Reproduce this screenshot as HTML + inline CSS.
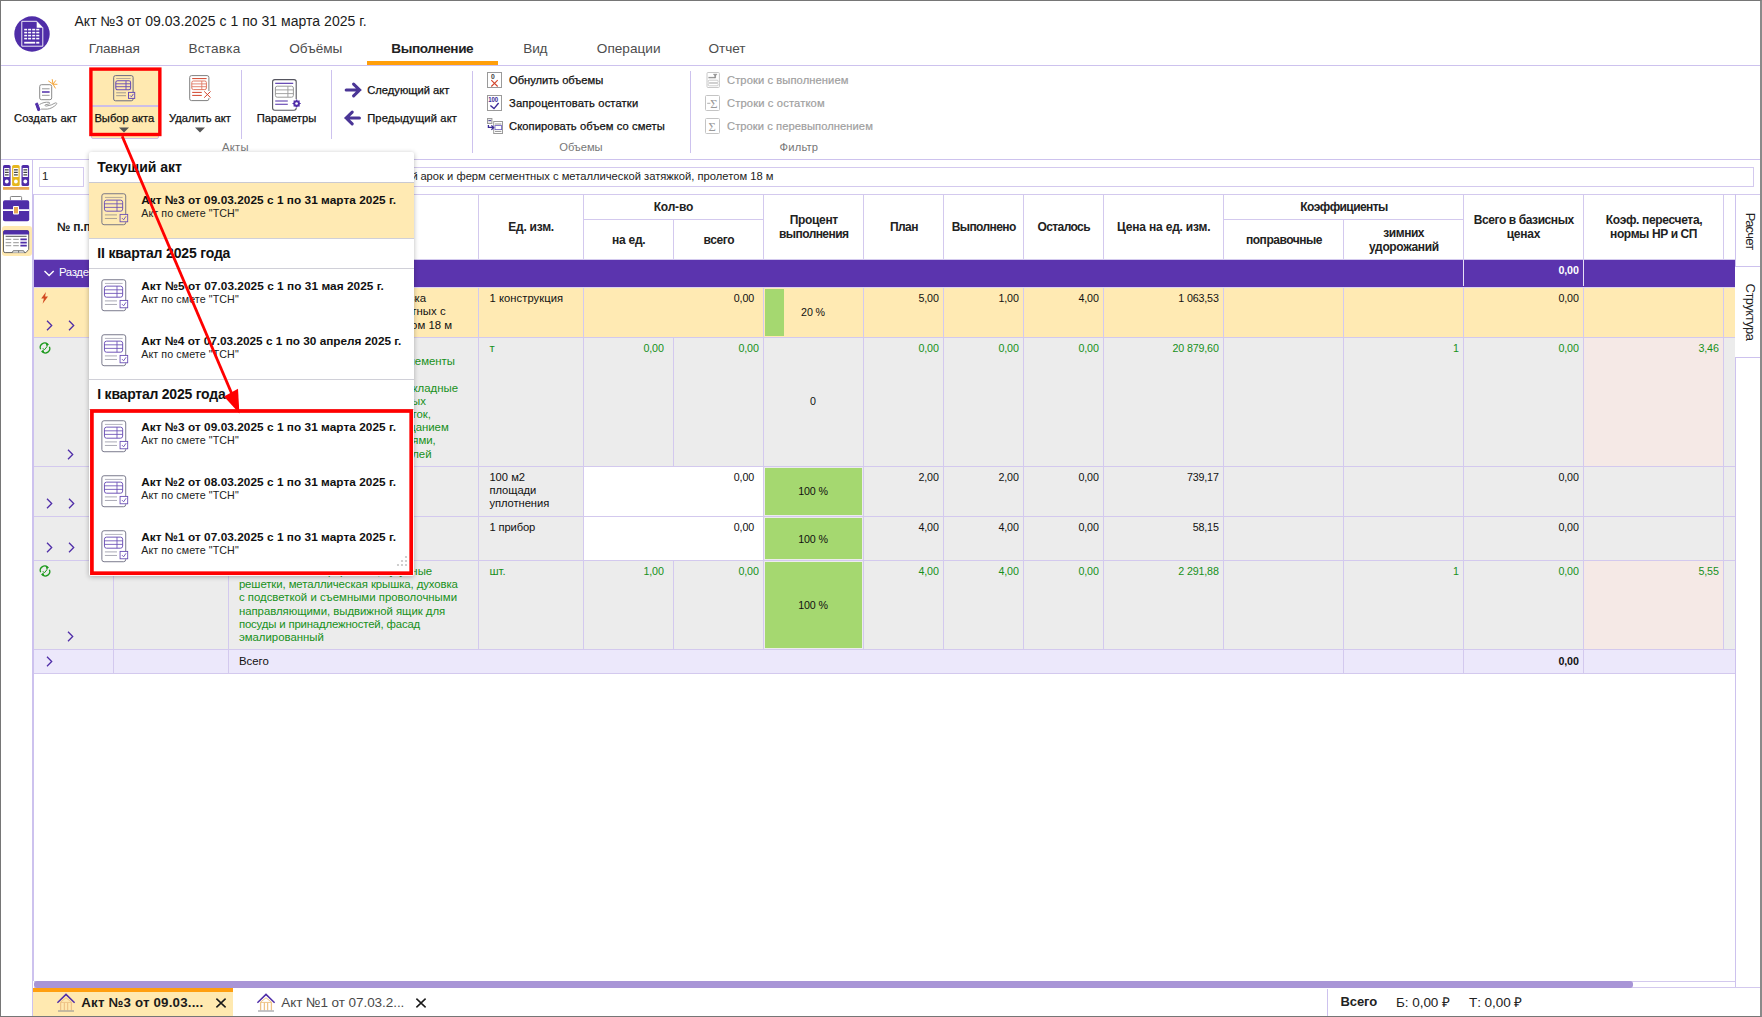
<!DOCTYPE html>
<html lang="ru"><head><meta charset="utf-8"><title>Акт №3</title>
<style>
html,body{margin:0;padding:0;}
body{width:1762px;height:1017px;overflow:hidden;background:#fff;position:relative;font-family:"Liberation Sans",sans-serif;color:#111;}
div{position:absolute;box-sizing:border-box;}
svg{position:absolute;overflow:visible;}
.t{white-space:nowrap;font-size:11.4px;line-height:13px;letter-spacing:0;}
.b{font-weight:bold;}
.n{font-size:10.7px;letter-spacing:-0.15px;}
.g{color:#17901a;}
.h{font-weight:bold;font-size:12px;line-height:14px;color:#222;text-align:center;letter-spacing:-0.2px;}
.m{font-size:14px;line-height:16px;color:#4d4d4d;letter-spacing:0;}
.rb{font-size:11px;line-height:13px;color:#111;-webkit-text-stroke:0.25px #111;}
.grp{font-size:11px;line-height:13px;color:#777;}
.dis{color:#a0a0a0;-webkit-text-stroke:0.2px #a0a0a0;}
.w{white-space:normal;}
</style></head><body>

<div class="t " style="left:74.5px;top:12px;font-size:14px;letter-spacing:0.031px;line-height:18px;color:#1c1c1c;">Акт №3 от 09.03.2025 с 1 по 31 марта 2025 г.</div>
<svg style="left:13.8px;top:16.3px" width="36" height="36" viewBox="0 0 36 36">
<circle cx="18" cy="18" r="17.7" fill="#4f2da8"/>
<path d="M7.8 5.3h14.9l6.1 6.4v18.5h-21z" fill="none" stroke="#fff" stroke-width="1" stroke-opacity="0.9"/>
<path d="M22.7 5.3v6.4h6.1z" fill="#fff"/>
<g fill="#fff"><rect x="10.2" y="12.8" width="2.9" height="1.6"/><rect x="14.1" y="12.8" width="3.0" height="1.6"/><rect x="18.2" y="12.8" width="3.0" height="1.6"/><rect x="22.2" y="12.8" width="3.1" height="1.6"/><rect x="10.2" y="15.8" width="2.9" height="1.6"/><rect x="14.1" y="15.8" width="3.0" height="1.6"/><rect x="18.2" y="15.8" width="3.0" height="1.6"/><rect x="22.2" y="15.8" width="3.1" height="1.6"/><rect x="10.2" y="18.8" width="2.9" height="1.6"/><rect x="14.1" y="18.8" width="3.0" height="1.6"/><rect x="18.2" y="18.8" width="3.0" height="1.6"/><rect x="22.2" y="18.8" width="3.1" height="1.6"/><rect x="10.2" y="21.8" width="2.9" height="1.6"/><rect x="14.1" y="21.8" width="3.0" height="1.6"/><rect x="18.2" y="21.8" width="3.0" height="1.6"/><rect x="22.2" y="21.8" width="3.1" height="1.6"/><rect x="10.2" y="25.8" width="11" height="1.8"/><rect x="22.2" y="25.8" width="3.1" height="1.8"/></g></svg>
<div class="t m" style="left:88.7px;top:41px;font-size:13.6px;letter-spacing:-0.094px;">Главная</div>
<div class="t m" style="left:188.6px;top:41px;font-size:13.6px;letter-spacing:0.192px;">Вставка</div>
<div class="t m" style="left:289.2px;top:41px;font-size:13.6px;letter-spacing:0.019px;">Объёмы</div>
<div class="t m" style="left:523.3px;top:41px;font-size:13.6px;letter-spacing:-0.202px;">Вид</div>
<div class="t m" style="left:596.8px;top:41px;font-size:13.6px;letter-spacing:0.012px;">Операции</div>
<div class="t m" style="left:708.5px;top:41px;font-size:13.6px;letter-spacing:-0.034px;">Отчет</div>
<div class="t m b" style="left:391.3px;top:41px;font-size:13.6px;letter-spacing:-0.419px;color:#222;">Выполнение</div>
<div style="left:1px;top:65px;width:1759px;height:1px;background:#cdc2ee"></div>
<div style="left:367px;top:61px;width:131px;height:4px;background:#ff9f0a"></div>
<div style="left:1px;top:159px;width:1759px;height:1px;background:#cdc2ee"></div>
<div style="left:241px;top:70px;width:1px;height:69px;background:#cdc2ee"></div>
<div style="left:331px;top:70px;width:1px;height:69px;background:#cdc2ee"></div>
<div style="left:472px;top:71px;width:1px;height:82px;background:#cdc2ee"></div>
<div style="left:690px;top:71px;width:1px;height:82px;background:#cdc2ee"></div>
<div style="left:91px;top:68px;width:68px;height:71px;background:#ffe9b0;border-radius:2px;border:1px solid #cdbfe8"></div>
<div style="left:92px;top:105px;width:66px;height:1px;background:#cdbfe8"></div>
<div style="left:92px;top:106px;width:66px;height:1px;background:#cdbfe8"></div>
<div class="t rb" style="left:14px;top:112px;font-size:11.2px;letter-spacing:0.094px;">Создать акт</div>
<div class="t rb" style="left:94.4px;top:112px;font-size:11.2px;letter-spacing:0.001px;">Выбор акта</div>
<div class="t rb" style="left:169px;top:112px;font-size:11.2px;letter-spacing:-0.026px;">Удалить акт</div>
<div class="t rb" style="left:256.7px;top:112px;font-size:11.2px;letter-spacing:-0.013px;">Параметры</div>
<svg style="left:119px;top:126.6px" width="10" height="6"><path d="M0 0.5h10l-5 5z" fill="#555"/></svg>
<svg style="left:195px;top:126.6px" width="10" height="6"><path d="M0 0.5h10l-5 5z" fill="#555"/></svg>
<div class="t grp" style="left:222px;top:141px;font-size:11.2px;letter-spacing:0.274px;">Акты</div>
<div class="t grp" style="left:559.3px;top:141px;font-size:11.2px;letter-spacing:-0.087px;">Объемы</div>
<div class="t grp" style="left:779.6px;top:141px;font-size:11.2px;letter-spacing:0.175px;">Фильтр</div>
<div class="t rb" style="left:367.2px;top:84px;font-size:11.2px;letter-spacing:0.003px;">Следующий акт</div>
<div class="t rb" style="left:367.2px;top:112px;font-size:11.2px;letter-spacing:0.123px;">Предыдущий акт</div>
<div class="t rb" style="left:509px;top:74px;font-size:11.2px;letter-spacing:-0.035px;">Обнулить объемы</div>
<div class="t rb" style="left:509px;top:97px;font-size:11.2px;letter-spacing:0.136px;">Запроцентовать остатки</div>
<div class="t rb" style="left:509px;top:120px;font-size:11.2px;letter-spacing:0.087px;">Скопировать объем со сметы</div>
<div class="t rb dis" style="left:727px;top:74px;font-size:11.2px;letter-spacing:0.078px;">Строки с выполнением</div>
<div class="t rb dis" style="left:727px;top:97px;font-size:11.2px;letter-spacing:0.134px;">Строки с остатком</div>
<div class="t rb dis" style="left:727px;top:120px;font-size:11.2px;letter-spacing:0.053px;">Строки с перевыполнением</div>
<svg style="left:30px;top:76px" width="32" height="38" viewBox="0 0 32 38" >
<rect x="9.7" y="8.7" width="12" height="15" rx="1.8" fill="#fff" stroke="#8a8a8a" stroke-width="1"/>
<path d="M12 12.8h7.6M12 19.3h7.6" stroke="#999" stroke-width="1"/>
<path d="M12 16h7.6" stroke="#4f2da8" stroke-width="1.5"/>
<path d="M23 8.2L18.3 4.9M23 8.2L22.2 3.2M23 8.2L25.8 4.4M23 8.2L27.4 8.3M23 8.2L25.5 12.4" stroke="#f5a63a" stroke-width="1" fill="none"/>
<path d="M9.5 28.5c3-1.8 6-2.6 9.5-2.2c1 .3.8 1.6-.3 1.8l-3.2.6c-1 .4-.4 1.6.8 1.4l5-1.2l4-2c1.2-.4 2 .6 1 1.6c-2.6 2.6-5.6 4.2-9 4.6h-6.2" fill="#fff" stroke="#9a9a9a" stroke-width="1"/>
<path d="M5.5 27.8l1.9-.9l2.6 7l-2 .9z" fill="#4f2da8" stroke="#4f2da8" stroke-width="1" stroke-linejoin="round"/>
</svg>
<svg style="left:113px;top:75px" width="24.0" height="28.0" viewBox="0 0 24 28">
<rect x="0.7" y="0.6" width="19.4" height="25.2" rx="1.8" fill="none" stroke="#6b6b80" stroke-width="1.00"/>
<path d="M3.2 3.6h14.4" stroke="#6b6b80" stroke-width="0.80" opacity="0.7"/>
<rect x="2.8" y="5.8" width="14.8" height="9" rx="1.7" fill="none" stroke="#6a4fb5" stroke-width="1.05"/>
<path d="M2.8 8.8h14.8M2.8 11.7h14.8M13 5.8v9" stroke="#6a4fb5" stroke-width="0.95"/>
<path d="M3.2 17.8h9.8M3.2 20.7h9.8" stroke="#6b6b80" stroke-width="0.90" opacity="0.7"/>
<rect x="15.5" y="17.4" width="6.2" height="6" fill="#ffe9b0" stroke="#6a4fb5" stroke-width="1.00"/>
<path d="M17 20.4l1.4 1.4l2-2.9" stroke="#6a4fb5" stroke-width="1.00" fill="none"/>
</svg>
<svg style="left:189px;top:75px" width="24" height="28" viewBox="0 0 24 28" >
<rect x="0.7" y="0.6" width="19.2" height="25" rx="1.8" fill="#fff" stroke="#808080" stroke-width="1"/>
<path d="M3.2 3.6h14.4" stroke="#d2452c" stroke-width="1"/>
<rect x="2.8" y="6" width="14.6" height="8.6" rx="1.6" fill="none" stroke="#e07a66" stroke-width="1"/>
<path d="M2.8 8.9h14.6M2.8 11.7h14.6M12.8 6v8.6" stroke="#e07a66" stroke-width="0.9"/>
<path d="M3.2 17.4h9.6M3.2 20.4h9.6" stroke="#d2452c" stroke-width="1"/>
<rect x="14.5" y="16" width="7" height="7" fill="#fff"/>
<path d="M15.2 16.4l6.4 6.3M21.6 16.4l-6.4 6.3" stroke="#d2452c" stroke-width="1"/>
</svg>
<svg style="left:272px;top:79px" width="30" height="33" viewBox="0 0 30 33" >
<rect x="0.6" y="0.6" width="23.6" height="30.6" rx="2.2" fill="#fff" stroke="#55555f" stroke-width="1.1"/>
<path d="M3.2 4.3h18" stroke="#4f2da8" stroke-width="1.1"/>
<rect x="3.4" y="7.2" width="18" height="11" rx="1.8" fill="none" stroke="#9a9a9a" stroke-width="1"/>
<path d="M3.4 10.9h18M3.4 14.6h18M15.9 7.2v11" stroke="#9a9a9a" stroke-width="0.9"/>
<path d="M3.2 22h12.6M3.2 25.3h12.6" stroke="#4f2da8" stroke-width="1.1"/>
<circle cx="24.6" cy="24.5" r="4.4" fill="#fff"/>
<circle cx="24.6" cy="24.5" r="2.5" fill="none" stroke="#4f2da8" stroke-width="1.7"/>
<path d="M24.6 20.4v8.2M20.5 24.5h8.2M21.7 21.6l5.8 5.8M27.5 21.6l-5.8 5.8" stroke="#4f2da8" stroke-width="1.2"/>
<circle cx="24.6" cy="24.5" r="1.3" fill="#fff"/>
</svg>
<svg style="left:344px;top:82px" width="18" height="16" viewBox="0 0 18 16" ><path d="M2.2 8h13.2M9.6 2.2l6 5.8l-6 5.8" fill="none" stroke="#4a3596" stroke-width="3.1" stroke-linecap="round" stroke-linejoin="miter"/></svg>
<svg style="left:344px;top:109.5px" width="18" height="16" viewBox="0 0 18 16" ><path d="M15.4 8H2.4M8.2 2.2l-6 5.8l6 5.8" fill="none" stroke="#4a3596" stroke-width="3.1" stroke-linecap="round" stroke-linejoin="miter"/></svg>
<svg style="left:487px;top:72px" width="16" height="16" viewBox="0 0 16 16" ><rect x="0.5" y="0.5" width="14" height="15" fill="#fff" stroke="#9a9a9a"/>
<text x="4" y="7" font-size="6.8" font-weight="bold" font-family="Liberation Sans, sans-serif" fill="#444">0</text>
<path d="M4.3 8.2l6.4 6.3M10.7 8.2l-6.4 6.3" stroke="#d2452c" stroke-width="1.1"/></svg>
<svg style="left:487px;top:95px" width="16" height="16" viewBox="0 0 16 16" ><rect x="0.5" y="0.5" width="14" height="15" fill="#fff" stroke="#9a9a9a"/>
<text x="1.2" y="7" font-size="6.4" font-weight="bold" font-family="Liberation Sans, sans-serif" fill="#3a2a98" textLength="10" lengthAdjust="spacingAndGlyphs">100</text>
<path d="M3.4 10.4l3.6 3.2l4.6-5.6" stroke="#3a2a98" stroke-width="1.4" fill="none"/></svg>
<svg style="left:487px;top:118px" width="17" height="17" viewBox="0 0 17 17" ><rect x="0.5" y="0.5" width="4.4" height="5" fill="#e8e8e8" stroke="#9a9a9a"/>
<path d="M1.4 2.6h2.8" stroke="#3a2a98" stroke-width="0.9"/>
<rect x="6.7" y="3.5" width="8.8" height="12" fill="#fff" stroke="#9a9a9a"/>
<path d="M8 6h6.4M8 13.4h6.4" stroke="#777" stroke-width="0.8"/>
<rect x="8" y="7.6" width="6.6" height="4" fill="none" stroke="#6a5ac0" stroke-width="0.8"/>
<path d="M1.4 7v2.4h4.4M4.4 7.4l2.2 2.2l-2.2 2.2" stroke="#3a2a98" stroke-width="1.3" fill="none"/></svg>
<svg style="left:706px;top:72px" width="16" height="16" viewBox="0 0 16 16" ><rect x="1" y="0.5" width="12.4" height="15" rx="1" fill="#fff" stroke="#c8c8c8"/>
<path d="M2.4 5.6h7" stroke="#999" stroke-width="1.4"/>
<path d="M7.4 2.2h3.6l-1.4 1.6v2h-0.8v-2z" fill="#888" stroke="#888" stroke-width="0.5"/>
<rect x="2.3" y="8.2" width="9.8" height="2.4" rx="1" fill="none" stroke="#c0c0c0" stroke-width="0.8"/>
<rect x="2.3" y="11.4" width="9.8" height="2.4" rx="1" fill="none" stroke="#c0c0c0" stroke-width="0.8"/></svg>
<svg style="left:705px;top:95px" width="16" height="16" viewBox="0 0 16 16" ><rect x="0.5" y="0.5" width="14" height="15" rx="1" fill="#fff" stroke="#c4c4c4"/>
<text x="5.2" y="12.6" font-size="12.5" font-family="Liberation Serif, serif" fill="#9a9a9a">Σ</text><path d="M2.2 8.3h3.2" stroke="#9a9a9a" stroke-width="0.8"/></svg>
<svg style="left:705px;top:118px" width="16" height="16" viewBox="0 0 16 16" ><rect x="0.5" y="0.5" width="14" height="15" rx="1" fill="#fff" stroke="#c4c4c4"/>
<text x="3.4" y="12.6" font-size="12.5" font-family="Liberation Serif, serif" fill="#9a9a9a">Σ</text></svg>
<div style="left:32px;top:160px;width:1px;height:856px;background:#cdc2ee"></div>
<div style="left:1.5px;top:226px;width:30px;height:30px;background:#ffe9b0;border-radius:3px"></div>
<svg style="left:3px;top:165px" width="27" height="25" viewBox="0 0 27 25" ><rect x="0" y="0" width="7.6" height="21" rx="1.6" fill="#4f2da8"/><rect x="1.2" y="3" width="5.2" height="9" fill="#fff"/><path d="M1.9 4.9h3.8M1.9 7.4h3.8M1.9 9.9h3.8" stroke="#444" stroke-width="1.1"/><circle cx="3.8" cy="16.5" r="1.9" fill="#fff"/><rect x="9.1" y="0" width="7.6" height="21" rx="1.6" fill="#e6b71e"/><rect x="10.299999999999999" y="3" width="5.2" height="9" fill="#fff"/><path d="M11.0 4.9h3.8M11.0 7.4h3.8M11.0 9.9h3.8" stroke="#444" stroke-width="1.1"/><circle cx="12.899999999999999" cy="16.5" r="1.9" fill="#fff"/><rect x="18.5" y="0" width="7.6" height="21" rx="1.6" fill="#4f2da8"/><rect x="19.7" y="3" width="5.2" height="9" fill="#fff"/><path d="M20.4 4.9h3.8M20.4 7.4h3.8M20.4 9.9h3.8" stroke="#444" stroke-width="1.1"/><circle cx="22.3" cy="16.5" r="1.9" fill="#fff"/><rect x="0" y="22" width="26.2" height="2.8" fill="#e9a953"/></svg>
<svg style="left:3px;top:195px" width="27" height="27" viewBox="0 0 27 27" >
<path d="M7.4 5v-2.6q0-.9.9-.9h9.4q.9 0 .9.9v2.6" fill="none" stroke="#777" stroke-width="0.9"/>
<rect x="0" y="5.2" width="26.2" height="21" rx="1.8" fill="#4f2da8"/>
<rect x="0" y="14.2" width="26.2" height="1.8" fill="#fff"/>
<rect x="10" y="11" width="6" height="8.4" rx="0.8" fill="#fff"/>
<rect x="11" y="12" width="4" height="6.4" fill="#e9a953"/></svg>
<svg style="left:3px;top:230px" width="27" height="24" viewBox="0 0 27 24" >
<path d="M0.5 2.2q0-1.7 1.7-1.7h21.8q1.7 0 1.7 1.7v17.2l-2.8 3.2h-20.7q-1.7 0-1.7-1.7z" fill="#fff" stroke="#555" stroke-width="0.9"/>
<path d="M0.2 2.2q0-2 2-2h21.8q2 0 2 2v2.2h-25.8z" fill="#4f2da8"/>
<path d="M2.6 6.3h21" stroke="#555" stroke-width="1"/>
<path d="M2.6 9.4h5.6M10.2 9.4h5.6M2.6 12.6h5.6M10.2 12.6h5.6M2.6 15.6h5.6M10.2 15.6h5.6" stroke="#aaa" stroke-width="1.2"/>
<path d="M17.4 9.4h6.4M17.4 12.6h6.4M17.4 15.6h6.4" stroke="#4f2da8" stroke-width="1.6"/>
<path d="M9.2 22.6l1-1.8h10.4l1 1.8" fill="#fff" stroke="#555" stroke-width="0.9"/><path d="M15.6 20.8v1.8" stroke="#555" stroke-width="0.8"/></svg>
<div style="left:39px;top:167px;width:45px;height:20px;border:1px solid #d3c9ee;background:#fff"></div>
<div class="t " style="left:42px;top:170px;color:#222">1</div>
<div style="left:92px;top:167px;width:1662px;height:20px;border:1px solid #d3c9ee;background:#fff"></div>
<div class="t " style="left:411.4px;top:170px;color:#222;font-size:11.2px">й</div>
<div class="t " style="left:420.4px;top:170px;font-size:11.2px;letter-spacing:0.003px;color:#222">арок и ферм сегментных с металлической затяжкой, пролетом 18 м</div>
<div style="left:33px;top:194px;width:1727px;height:1px;background:#d3c9ee"></div>
<div style="left:33px;top:194px;width:1px;height:787px;background:#cdc2ee"></div>
<div style="left:113px;top:194px;width:1px;height:65px;background:#d3c9ee"></div>
<div style="left:228px;top:194px;width:1px;height:65px;background:#d3c9ee"></div>
<div style="left:478px;top:194px;width:1px;height:65px;background:#d3c9ee"></div>
<div style="left:583px;top:194px;width:1px;height:65px;background:#d3c9ee"></div>
<div style="left:673px;top:219px;width:1px;height:40px;background:#d3c9ee"></div>
<div style="left:763px;top:194px;width:1px;height:65px;background:#d3c9ee"></div>
<div style="left:863px;top:194px;width:1px;height:65px;background:#d3c9ee"></div>
<div style="left:943px;top:194px;width:1px;height:65px;background:#d3c9ee"></div>
<div style="left:1023px;top:194px;width:1px;height:65px;background:#d3c9ee"></div>
<div style="left:1103px;top:194px;width:1px;height:65px;background:#d3c9ee"></div>
<div style="left:1223px;top:194px;width:1px;height:65px;background:#d3c9ee"></div>
<div style="left:1343px;top:219px;width:1px;height:40px;background:#d3c9ee"></div>
<div style="left:1463px;top:194px;width:1px;height:65px;background:#d3c9ee"></div>
<div style="left:1583px;top:194px;width:1px;height:65px;background:#d3c9ee"></div>
<div style="left:1723px;top:194px;width:1px;height:65px;background:#d3c9ee"></div>
<div style="left:1735px;top:194px;width:1px;height:65px;background:#d3c9ee"></div>
<div style="left:583px;top:219px;width:180px;height:1px;background:#d3c9ee"></div>
<div style="left:1223px;top:219px;width:240px;height:1px;background:#d3c9ee"></div>
<div class="t h" style="left:57px;top:220px;text-align:left">№ п.п</div>
<div class="t h" style="left:508.25000000000006px;top:220px;font-size:12px;letter-spacing:-0.235px;text-align:left;">Ед. изм.</div>
<div class="t h" style="left:653.75px;top:200px;font-size:12px;letter-spacing:-0.205px;text-align:left;">Кол-во</div>
<div class="t h" style="left:612.0px;top:233px;font-size:12px;letter-spacing:-0.256px;text-align:left;">на ед.</div>
<div class="t h" style="left:703.5px;top:233px;font-size:12px;letter-spacing:-0.399px;text-align:left;">всего</div>
<div class="t h" style="left:789.85px;top:213px;font-size:12px;letter-spacing:-0.360px;text-align:left;">Процент</div>
<div class="t h" style="left:779.05px;top:227px;font-size:12px;letter-spacing:-0.575px;text-align:left;">выполнения</div>
<div class="t h" style="left:890.0px;top:220px;font-size:12px;letter-spacing:-0.590px;text-align:left;">План</div>
<div class="t h" style="left:951.65px;top:220px;font-size:12px;letter-spacing:-0.577px;text-align:left;">Выполнено</div>
<div class="t h" style="left:1037.45px;top:220px;font-size:12px;letter-spacing:-0.592px;text-align:left;">Осталось</div>
<div class="t h" style="left:1117.05px;top:220px;font-size:12px;letter-spacing:-0.187px;text-align:left;">Цена на ед. изм.</div>
<div class="t h" style="left:1300.3px;top:200px;font-size:12px;letter-spacing:-0.573px;text-align:left;">Коэффициенты</div>
<div class="t h" style="left:1246.0px;top:233px;font-size:12px;letter-spacing:-0.482px;text-align:left;">поправочные</div>
<div class="t h" style="left:1383.25px;top:226px;font-size:12px;letter-spacing:-0.444px;text-align:left;">зимних</div>
<div class="t h" style="left:1369.1px;top:240px;font-size:12px;letter-spacing:-0.351px;text-align:left;">удорожаний</div>
<div class="t h" style="left:1473.8px;top:213px;font-size:12px;letter-spacing:-0.416px;text-align:left;">Всего в базисных</div>
<div class="t h" style="left:1453.5px;top:227px;width:140px;">ценах</div>
<div class="t h" style="left:1605.8px;top:213px;font-size:12px;letter-spacing:-0.333px;text-align:left;">Коэф. пересчета,</div>
<div class="t h" style="left:1610.1px;top:227px;font-size:12px;letter-spacing:-0.401px;text-align:left;">нормы НР и СП</div>
<div style="left:34px;top:259px;width:1701px;height:1px;background:#d3c9ee"></div>
<div style="left:34px;top:287px;width:1701px;height:1px;background:#dcd3f1"></div>
<div style="left:34px;top:260px;width:1701px;height:27px;background:#5b34ae"></div>
<div style="left:1463px;top:260px;width:1px;height:26px;background:#e6e0f6"></div>
<div style="left:1583px;top:260px;width:1px;height:26px;background:#e6e0f6"></div>
<div class="t " style="left:59px;top:266px;font-size:11.4px;letter-spacing:-0.352px;color:#fff;">Разде</div>
<svg style="left:43px;top:268px" width="12" height="9"><path d="M1.5 3l4.6 4.6l4.6-4.6" fill="none" stroke="#fff" stroke-width="1.4"/></svg>
<div class="t b n" style="left:1463px;top:264px;width:115.7px;text-align:right;color:#fff">0,00</div>
<div style="left:34px;top:288px;width:1701px;height:49px;background:#ffeab3"></div>
<div style="left:34px;top:337px;width:1701px;height:1px;background:#d3c9ee"></div>
<div style="left:113px;top:288px;width:1px;height:49px;background:#d3c9ee"></div>
<div style="left:228px;top:288px;width:1px;height:49px;background:#d3c9ee"></div>
<div style="left:478px;top:288px;width:1px;height:49px;background:#d3c9ee"></div>
<div style="left:583px;top:288px;width:1px;height:49px;background:#d3c9ee"></div>
<div style="left:763px;top:288px;width:1px;height:49px;background:#d3c9ee"></div>
<div style="left:863px;top:288px;width:1px;height:49px;background:#d3c9ee"></div>
<div style="left:943px;top:288px;width:1px;height:49px;background:#d3c9ee"></div>
<div style="left:1023px;top:288px;width:1px;height:49px;background:#d3c9ee"></div>
<div style="left:1103px;top:288px;width:1px;height:49px;background:#d3c9ee"></div>
<div style="left:1223px;top:288px;width:1px;height:49px;background:#d3c9ee"></div>
<div style="left:1343px;top:288px;width:1px;height:49px;background:#d3c9ee"></div>
<div style="left:1463px;top:288px;width:1px;height:49px;background:#d3c9ee"></div>
<div style="left:1583px;top:288px;width:1px;height:49px;background:#d3c9ee"></div>
<div style="left:1723px;top:288px;width:1px;height:49px;background:#d3c9ee"></div>
<div style="left:34px;top:338px;width:1701px;height:128px;background:#ececec"></div>
<div style="left:34px;top:466px;width:1701px;height:1px;background:#d3c9ee"></div>
<div style="left:113px;top:338px;width:1px;height:128px;background:#d3c9ee"></div>
<div style="left:228px;top:338px;width:1px;height:128px;background:#d3c9ee"></div>
<div style="left:478px;top:338px;width:1px;height:128px;background:#d3c9ee"></div>
<div style="left:583px;top:338px;width:1px;height:128px;background:#d3c9ee"></div>
<div style="left:673px;top:338px;width:1px;height:128px;background:#d3c9ee"></div>
<div style="left:763px;top:338px;width:1px;height:128px;background:#d3c9ee"></div>
<div style="left:863px;top:338px;width:1px;height:128px;background:#d3c9ee"></div>
<div style="left:943px;top:338px;width:1px;height:128px;background:#d3c9ee"></div>
<div style="left:1023px;top:338px;width:1px;height:128px;background:#d3c9ee"></div>
<div style="left:1103px;top:338px;width:1px;height:128px;background:#d3c9ee"></div>
<div style="left:1223px;top:338px;width:1px;height:128px;background:#d3c9ee"></div>
<div style="left:1343px;top:338px;width:1px;height:128px;background:#d3c9ee"></div>
<div style="left:1463px;top:338px;width:1px;height:128px;background:#d3c9ee"></div>
<div style="left:1583px;top:338px;width:1px;height:128px;background:#d3c9ee"></div>
<div style="left:1723px;top:338px;width:1px;height:128px;background:#d3c9ee"></div>
<div style="left:34px;top:467px;width:1701px;height:49px;background:#ececec"></div>
<div style="left:34px;top:516px;width:1701px;height:1px;background:#d3c9ee"></div>
<div style="left:113px;top:467px;width:1px;height:49px;background:#d3c9ee"></div>
<div style="left:228px;top:467px;width:1px;height:49px;background:#d3c9ee"></div>
<div style="left:478px;top:467px;width:1px;height:49px;background:#d3c9ee"></div>
<div style="left:583px;top:467px;width:1px;height:49px;background:#d3c9ee"></div>
<div style="left:763px;top:467px;width:1px;height:49px;background:#d3c9ee"></div>
<div style="left:863px;top:467px;width:1px;height:49px;background:#d3c9ee"></div>
<div style="left:943px;top:467px;width:1px;height:49px;background:#d3c9ee"></div>
<div style="left:1023px;top:467px;width:1px;height:49px;background:#d3c9ee"></div>
<div style="left:1103px;top:467px;width:1px;height:49px;background:#d3c9ee"></div>
<div style="left:1223px;top:467px;width:1px;height:49px;background:#d3c9ee"></div>
<div style="left:1343px;top:467px;width:1px;height:49px;background:#d3c9ee"></div>
<div style="left:1463px;top:467px;width:1px;height:49px;background:#d3c9ee"></div>
<div style="left:1583px;top:467px;width:1px;height:49px;background:#d3c9ee"></div>
<div style="left:1723px;top:467px;width:1px;height:49px;background:#d3c9ee"></div>
<div style="left:34px;top:517px;width:1701px;height:43px;background:#ececec"></div>
<div style="left:34px;top:560px;width:1701px;height:1px;background:#d3c9ee"></div>
<div style="left:113px;top:517px;width:1px;height:43px;background:#d3c9ee"></div>
<div style="left:228px;top:517px;width:1px;height:43px;background:#d3c9ee"></div>
<div style="left:478px;top:517px;width:1px;height:43px;background:#d3c9ee"></div>
<div style="left:583px;top:517px;width:1px;height:43px;background:#d3c9ee"></div>
<div style="left:763px;top:517px;width:1px;height:43px;background:#d3c9ee"></div>
<div style="left:863px;top:517px;width:1px;height:43px;background:#d3c9ee"></div>
<div style="left:943px;top:517px;width:1px;height:43px;background:#d3c9ee"></div>
<div style="left:1023px;top:517px;width:1px;height:43px;background:#d3c9ee"></div>
<div style="left:1103px;top:517px;width:1px;height:43px;background:#d3c9ee"></div>
<div style="left:1223px;top:517px;width:1px;height:43px;background:#d3c9ee"></div>
<div style="left:1343px;top:517px;width:1px;height:43px;background:#d3c9ee"></div>
<div style="left:1463px;top:517px;width:1px;height:43px;background:#d3c9ee"></div>
<div style="left:1583px;top:517px;width:1px;height:43px;background:#d3c9ee"></div>
<div style="left:1723px;top:517px;width:1px;height:43px;background:#d3c9ee"></div>
<div style="left:34px;top:561px;width:1701px;height:88px;background:#ececec"></div>
<div style="left:34px;top:649px;width:1701px;height:1px;background:#d3c9ee"></div>
<div style="left:113px;top:561px;width:1px;height:88px;background:#d3c9ee"></div>
<div style="left:228px;top:561px;width:1px;height:88px;background:#d3c9ee"></div>
<div style="left:478px;top:561px;width:1px;height:88px;background:#d3c9ee"></div>
<div style="left:583px;top:561px;width:1px;height:88px;background:#d3c9ee"></div>
<div style="left:673px;top:561px;width:1px;height:88px;background:#d3c9ee"></div>
<div style="left:763px;top:561px;width:1px;height:88px;background:#d3c9ee"></div>
<div style="left:863px;top:561px;width:1px;height:88px;background:#d3c9ee"></div>
<div style="left:943px;top:561px;width:1px;height:88px;background:#d3c9ee"></div>
<div style="left:1023px;top:561px;width:1px;height:88px;background:#d3c9ee"></div>
<div style="left:1103px;top:561px;width:1px;height:88px;background:#d3c9ee"></div>
<div style="left:1223px;top:561px;width:1px;height:88px;background:#d3c9ee"></div>
<div style="left:1343px;top:561px;width:1px;height:88px;background:#d3c9ee"></div>
<div style="left:1463px;top:561px;width:1px;height:88px;background:#d3c9ee"></div>
<div style="left:1583px;top:561px;width:1px;height:88px;background:#d3c9ee"></div>
<div style="left:1723px;top:561px;width:1px;height:88px;background:#d3c9ee"></div>
<div style="left:34px;top:650px;width:1701px;height:23px;background:#ece8fb"></div>
<div style="left:34px;top:673px;width:1701px;height:1px;background:#d3c9ee"></div>
<div style="left:113px;top:650px;width:1px;height:23px;background:#d3c9ee"></div>
<div style="left:228px;top:650px;width:1px;height:23px;background:#d3c9ee"></div>
<div style="left:1343px;top:650px;width:1px;height:23px;background:#d3c9ee"></div>
<div style="left:1463px;top:650px;width:1px;height:23px;background:#d3c9ee"></div>
<div style="left:1583px;top:650px;width:1px;height:23px;background:#d3c9ee"></div>
<div style="left:1584px;top:338px;width:139px;height:128px;background:#f5e9e6"></div>
<div style="left:1584px;top:561px;width:139px;height:88px;background:#f5e9e6"></div>
<div style="left:584px;top:467px;width:179px;height:49px;background:#fff"></div>
<div style="left:584px;top:517px;width:179px;height:43px;background:#fff"></div>
<div style="left:765px;top:289px;width:19px;height:47px;background:#a5d870"></div>
<div style="left:765px;top:468px;width:97px;height:47px;background:#a5d870"></div>
<div style="left:765px;top:518px;width:97px;height:41px;background:#a5d870"></div>
<div style="left:765px;top:562px;width:97px;height:86px;background:#a5d870"></div>
<div class="t " style="left:489.4px;top:292.1px;font-size:11.2px;letter-spacing:0.079px;">1 конструкция</div>
<div class="t  n" style="left:584px;top:292.1px;width:170px;text-align:right;">0,00</div>
<div class="t  n" style="left:763px;top:306.1px;width:100px;text-align:center;">20 %</div>
<div class="t  n" style="left:863px;top:292.1px;width:75.7px;text-align:right;">5,00</div>
<div class="t  n" style="left:943px;top:292.1px;width:75.7px;text-align:right;">1,00</div>
<div class="t  n" style="left:1023px;top:292.1px;width:75.7px;text-align:right;">4,00</div>
<div class="t  n" style="left:1103px;top:292.1px;width:115.7px;text-align:right;">1 063,53</div>
<div class="t  n" style="left:1463px;top:292.1px;width:115.7px;text-align:right;">0,00</div>
<div class="t " style="left:126.19999999999999px;top:292.1px;width:300px;text-align:right;">Установка</div>
<div class="t " style="left:145.60000000000002px;top:305.4px;width:300px;text-align:right;">и подстропильных ферм сегментных с</div>
<div class="t " style="left:152.10000000000002px;top:318.7px;width:300px;text-align:right;">затяжкой, пролетом 18 м</div>
<div class="t g" style="left:489.4px;top:342.3px;">т</div>
<div class="t g n" style="left:583px;top:342.3px;width:80.7px;text-align:right;">0,00</div>
<div class="t g n" style="left:673px;top:342.3px;width:85.7px;text-align:right;">0,00</div>
<div class="t  n" style="left:763px;top:395.3px;width:100px;text-align:center;">0</div>
<div class="t g n" style="left:863px;top:342.3px;width:75.7px;text-align:right;">0,00</div>
<div class="t g n" style="left:943px;top:342.3px;width:75.7px;text-align:right;">0,00</div>
<div class="t g n" style="left:1023px;top:342.3px;width:75.7px;text-align:right;">0,00</div>
<div class="t g n" style="left:1103px;top:342.3px;width:115.7px;text-align:right;">20 879,60</div>
<div class="t g n" style="left:1343px;top:342.3px;width:115.7px;text-align:right;">1</div>
<div class="t g n" style="left:1463px;top:342.3px;width:115.7px;text-align:right;">0,00</div>
<div class="t g n" style="left:1583px;top:342.3px;width:135.7px;text-align:right;">3,46</div>
<div class="t g" style="left:155px;top:355.4px;width:300px;text-align:right;">Конструкции стальные, элементы</div>
<div class="t g" style="left:158px;top:381.9px;width:300px;text-align:right;">конструкций, детали закладные</div>
<div class="t g" style="left:126px;top:395.1px;width:300px;text-align:right;">и накладные из прокатных</div>
<div class="t g" style="left:131px;top:408.2px;width:300px;text-align:right;">профилей, без заготок,</div>
<div class="t g" style="left:148.8px;top:421.3px;width:300px;text-align:right;">изготовленные с заданием</div>
<div class="t g" style="left:135.8px;top:434.4px;width:300px;text-align:right;">сварки, гнутья, сверлениями,</div>
<div class="t g" style="left:131.5px;top:447.5px;width:300px;text-align:right;">ферм, балок, ригелей</div>
<div class="t " style="left:489.4px;top:470.8px;font-size:11.2px;letter-spacing:-0.006px;">100 м2</div>
<div class="t " style="left:489.4px;top:483.95px;font-size:11.2px;letter-spacing:-0.032px;">площади</div>
<div class="t " style="left:489.4px;top:497.1px;font-size:11.2px;letter-spacing:-0.051px;">уплотнения</div>
<div class="t  n" style="left:584px;top:470.8px;width:170px;text-align:right;">0,00</div>
<div class="t  n" style="left:763px;top:485.2px;width:100px;text-align:center;">100 %</div>
<div class="t  n" style="left:863px;top:470.8px;width:75.7px;text-align:right;">2,00</div>
<div class="t  n" style="left:943px;top:470.8px;width:75.7px;text-align:right;">2,00</div>
<div class="t  n" style="left:1023px;top:470.8px;width:75.7px;text-align:right;">0,00</div>
<div class="t  n" style="left:1103px;top:470.8px;width:115.7px;text-align:right;">739,17</div>
<div class="t  n" style="left:1463px;top:470.8px;width:115.7px;text-align:right;">0,00</div>
<div class="t " style="left:489.4px;top:520.8px;font-size:11.2px;letter-spacing:-0.109px;">1 прибор</div>
<div class="t  n" style="left:584px;top:520.8px;width:170px;text-align:right;">0,00</div>
<div class="t  n" style="left:763px;top:532.5999999999999px;width:100px;text-align:center;">100 %</div>
<div class="t  n" style="left:863px;top:520.8px;width:75.7px;text-align:right;">4,00</div>
<div class="t  n" style="left:943px;top:520.8px;width:75.7px;text-align:right;">4,00</div>
<div class="t  n" style="left:1023px;top:520.8px;width:75.7px;text-align:right;">0,00</div>
<div class="t  n" style="left:1103px;top:520.8px;width:115.7px;text-align:right;">58,15</div>
<div class="t  n" style="left:1463px;top:520.8px;width:115.7px;text-align:right;">0,00</div>
<div class="t g" style="left:489.4px;top:565.4px;">шт.</div>
<div class="t g n" style="left:583px;top:565.4px;width:80.7px;text-align:right;">1,00</div>
<div class="t g n" style="left:673px;top:565.4px;width:85.7px;text-align:right;">0,00</div>
<div class="t  n" style="left:763px;top:598.6px;width:100px;text-align:center;">100 %</div>
<div class="t g n" style="left:863px;top:565.4px;width:75.7px;text-align:right;">4,00</div>
<div class="t g n" style="left:943px;top:565.4px;width:75.7px;text-align:right;">4,00</div>
<div class="t g n" style="left:1023px;top:565.4px;width:75.7px;text-align:right;">0,00</div>
<div class="t g n" style="left:1103px;top:565.4px;width:115.7px;text-align:right;">2 291,88</div>
<div class="t g n" style="left:1343px;top:565.4px;width:115.7px;text-align:right;">1</div>
<div class="t g n" style="left:1463px;top:565.4px;width:115.7px;text-align:right;">0,00</div>
<div class="t g n" style="left:1583px;top:565.4px;width:135.7px;text-align:right;">5,55</div>
<div class="t g" style="left:132.2px;top:565.4px;width:300px;text-align:right;">Плита газовая 4-х конфорочная, чугунные</div>
<div class="t g" style="left:238.9px;top:577.65px;font-size:11.4px;letter-spacing:-0.102px;">решетки, металлическая крышка, духовка</div>
<div class="t g" style="left:238.9px;top:590.8px;font-size:11.4px;letter-spacing:-0.002px;">с подсветкой и съемными проволочными</div>
<div class="t g" style="left:238.9px;top:604.85px;font-size:11.4px;letter-spacing:-0.035px;">направляющими, выдвижной ящик для</div>
<div class="t g" style="left:238.9px;top:618.0px;font-size:11.4px;letter-spacing:-0.171px;">посуды и принадлежностей, фасад</div>
<div class="t g" style="left:238.9px;top:631.15px;font-size:11.4px;letter-spacing:-0.010px;">эмалированный</div>
<div class="t " style="left:238.9px;top:654.5px;">Всего</div>
<div class="t b n" style="left:1463px;top:655.0px;width:115.7px;text-align:right;">0,00</div>
<svg style="left:41px;top:292px" width="8" height="12" viewBox="0 0 8 12" ><path d="M4.9 0L0.2 6.6h2.7L1.6 11.8L7 4.4H4.1z" fill="#d24a22"/></svg>
<svg style="left:46px;top:320px" width="7" height="11" viewBox="0 0 7 11" ><path d="M1 0.8l4.7 4.7l-4.7 4.7" fill="none" stroke="#4f2da8" stroke-width="1.3"/></svg>
<svg style="left:68px;top:320px" width="7" height="11" viewBox="0 0 7 11" ><path d="M1 0.8l4.7 4.7l-4.7 4.7" fill="none" stroke="#4f2da8" stroke-width="1.3"/></svg>
<svg style="left:39px;top:342px" width="12" height="12" viewBox="0 0 12 12" ><path d="M1.6 7.2A4.4 4.4 0 0 1 8.6 2.2" fill="none" stroke="#1e9a1e" stroke-width="1.3"/><path d="M6.6 0.6l3.4 1.6l-2.4 2.6z" fill="#1e9a1e"/>
<path d="M10.4 4.8A4.4 4.4 0 0 1 3.4 9.8" fill="none" stroke="#1e9a1e" stroke-width="1.3"/><path d="M5.4 11.4l-3.4-1.6l2.4-2.6z" fill="#1e9a1e"/>
<path d="M3.8 6.2l1.6 1.6l2.8-3.4" fill="none" stroke="#1e9a1e" stroke-width="1"/></svg>
<svg style="left:67px;top:449px" width="7" height="11" viewBox="0 0 7 11" ><path d="M1 0.8l4.7 4.7l-4.7 4.7" fill="none" stroke="#4f2da8" stroke-width="1.3"/></svg>
<svg style="left:46px;top:498px" width="7" height="11" viewBox="0 0 7 11" ><path d="M1 0.8l4.7 4.7l-4.7 4.7" fill="none" stroke="#4f2da8" stroke-width="1.3"/></svg>
<svg style="left:68px;top:498px" width="7" height="11" viewBox="0 0 7 11" ><path d="M1 0.8l4.7 4.7l-4.7 4.7" fill="none" stroke="#4f2da8" stroke-width="1.3"/></svg>
<svg style="left:46px;top:542px" width="7" height="11" viewBox="0 0 7 11" ><path d="M1 0.8l4.7 4.7l-4.7 4.7" fill="none" stroke="#4f2da8" stroke-width="1.3"/></svg>
<svg style="left:68px;top:542px" width="7" height="11" viewBox="0 0 7 11" ><path d="M1 0.8l4.7 4.7l-4.7 4.7" fill="none" stroke="#4f2da8" stroke-width="1.3"/></svg>
<svg style="left:39px;top:565px" width="12" height="12" viewBox="0 0 12 12" ><path d="M1.6 7.2A4.4 4.4 0 0 1 8.6 2.2" fill="none" stroke="#1e9a1e" stroke-width="1.3"/><path d="M6.6 0.6l3.4 1.6l-2.4 2.6z" fill="#1e9a1e"/>
<path d="M10.4 4.8A4.4 4.4 0 0 1 3.4 9.8" fill="none" stroke="#1e9a1e" stroke-width="1.3"/><path d="M5.4 11.4l-3.4-1.6l2.4-2.6z" fill="#1e9a1e"/>
<path d="M3.8 6.2l1.6 1.6l2.8-3.4" fill="none" stroke="#1e9a1e" stroke-width="1"/></svg>
<svg style="left:67px;top:631px" width="7" height="11" viewBox="0 0 7 11" ><path d="M1 0.8l4.7 4.7l-4.7 4.7" fill="none" stroke="#4f2da8" stroke-width="1.3"/></svg>
<svg style="left:46px;top:655.5px" width="7" height="11" viewBox="0 0 7 11" ><path d="M1 0.8l4.7 4.7l-4.7 4.7" fill="none" stroke="#4f2da8" stroke-width="1.3"/></svg>
<div style="left:1735px;top:194px;width:1px;height:73px;background:#cdc2ee"></div>
<div style="left:1735px;top:357px;width:1px;height:631px;background:#cdc2ee"></div>
<div style="left:1735px;top:266px;width:25px;height:1px;background:#cdc2ee"></div>
<div style="left:1735px;top:357px;width:25px;height:1px;background:#cdc2ee"></div>
<div class="t" style="left:1750px;top:230.7px;transform:translate(-50%,-50%) rotate(90deg);font-size:13px;line-height:15px;color:#222;letter-spacing:-0.790px">Расчет</div>
<div class="t" style="left:1750px;top:312.1px;transform:translate(-50%,-50%) rotate(90deg);font-size:13px;line-height:15px;color:#222;letter-spacing:-0.547px">Структура</div>
<div style="left:34px;top:981px;width:1701px;height:1px;background:#d3c9ee"></div>
<div style="left:34px;top:987px;width:1726px;height:1px;background:#d3c9ee"></div>
<div style="left:33.75px;top:981px;width:1599.2px;height:6.5px;background:#a895d6;border-radius:3px"></div>
<div style="left:33px;top:988px;width:200px;height:28px;background:#ffe9b0"></div>
<div style="left:33px;top:988px;width:200px;height:4px;background:#ff9f0f"></div>
<div class="t b" style="left:81.25px;top:995px;font-size:13.3px;letter-spacing:0.191px;line-height:16px;color:#1a1a1a;">Акт №3 от 09.03....</div>
<div class="t " style="left:281.25px;top:995px;font-size:13.5px;letter-spacing:-0.057px;line-height:16px;color:#4a4a4a;">Акт №1 от 07.03.2...</div>
<svg style="left:216.25px;top:998px" width="10" height="10"><path d="M0.4 0.6l9.2 8.8M9.6 0.6l-9.2 8.8" stroke="#1a1a1a" stroke-width="1.5" fill="none"/></svg>
<svg style="left:416.4px;top:998px" width="10" height="10"><path d="M0.4 0.6l9.2 8.8M9.6 0.6l-9.2 8.8" stroke="#1a1a1a" stroke-width="1.5" fill="none"/></svg>
<div style="left:1327px;top:989px;width:1px;height:27px;background:#cdc2ee"></div>
<div class="t b" style="left:1340.4px;top:994px;font-size:13px;letter-spacing:-0.058px;line-height:16px;color:#222;">Всего</div>
<div class="t " style="left:1395.9px;top:995px;font-size:13.5px;letter-spacing:-0.026px;line-height:16px;color:#222;">Б: 0,00 ₽</div>
<div class="t " style="left:1469.1px;top:995px;font-size:13.5px;letter-spacing:-0.075px;line-height:16px;color:#222;">Т: 0,00 ₽</div>
<svg style="left:56px;top:992px" width="20" height="20" viewBox="0 0 20 20" ><path d="M1.4 10.8L10 2.4L18.6 10.8" fill="none" stroke="#4f2da8" stroke-width="1.5"/>
<path d="M4.2 10.4L10 5.8L15.8 10.4z" fill="none" stroke="#efc488" stroke-width="1"/>
<path d="M4.6 10.6v7.6M8.4 10.6v7.6M11.6 10.6v7.6M15.4 10.6v7.6" stroke="#efc488" stroke-width="1.3"/>
<path d="M2 19h16" stroke="#8a8a90" stroke-width="1"/></svg><svg style="left:256px;top:992px" width="20" height="20" viewBox="0 0 20 20" ><path d="M1.4 10.8L10 2.4L18.6 10.8" fill="none" stroke="#4f2da8" stroke-width="1.5"/>
<path d="M4.2 10.4L10 5.8L15.8 10.4z" fill="none" stroke="#efc488" stroke-width="1"/>
<path d="M4.6 10.6v7.6M8.4 10.6v7.6M11.6 10.6v7.6M15.4 10.6v7.6" stroke="#efc488" stroke-width="1.3"/>
<path d="M2 19h16" stroke="#8a8a90" stroke-width="1"/></svg>
<div style="left:89px;top:152px;width:325px;height:424px;background:#fff;border-radius:2px;box-shadow:0 1px 5px rgba(0,0,0,0.28);">
<div class="t b" style="left:8.3px;top:6.5px;font-size:14px;letter-spacing:-0.050px;line-height:16px;color:#111;">Текущий акт</div>
<div style="left:0px;top:30px;width:325px;height:1px;background:#c9c9d2"></div>
<div style="left:0px;top:31px;width:325px;height:55px;background:#ffeab3"></div>
<div style="left:0px;top:86px;width:325px;height:1px;background:#d0d0d8"></div>
<div class="t b" style="left:8.3px;top:92.5px;font-size:14px;letter-spacing:-0.174px;line-height:16px;color:#111;">II квартал 2025 года</div>
<div style="left:0px;top:116px;width:325px;height:1px;background:#d0d0d8"></div>
<div style="left:0px;top:227px;width:325px;height:1px;background:#d0d0d8"></div>
<div class="t b" style="left:8.3px;top:233.5px;font-size:14px;letter-spacing:-0.228px;line-height:16px;color:#111;">I квартал 2025 года</div>
<div style="left:0px;top:257px;width:325px;height:1px;background:#d0d0d8"></div>
<div class="t b" style="left:52.2px;top:41px;font-size:11.8px;letter-spacing:0.048px;line-height:14px;color:#111;">Акт №3 от 09.03.2025 с 1 по 31 марта 2025 г.</div>
<div class="t " style="left:52.2px;top:54.5px;font-size:10.7px;letter-spacing:0.087px;line-height:13px;color:#222;">Акт по смете "ТСН"</div>
<svg style="left:12.3px;top:41.2px" width="29.52" height="34.44" viewBox="0 0 24 28">
<rect x="0.7" y="0.6" width="19.4" height="25.2" rx="1.8" fill="none" stroke="#6b6b80" stroke-width="0.73"/>
<path d="M3.2 3.6h14.4" stroke="#6b6b80" stroke-width="0.58" opacity="0.7"/>
<rect x="2.8" y="5.8" width="14.8" height="9" rx="1.7" fill="none" stroke="#6a4fb5" stroke-width="0.77"/>
<path d="M2.8 8.8h14.8M2.8 11.7h14.8M13 5.8v9" stroke="#6a4fb5" stroke-width="0.69"/>
<path d="M3.2 17.8h9.8M3.2 20.7h9.8" stroke="#6b6b80" stroke-width="0.66" opacity="0.7"/>
<rect x="15.5" y="17.4" width="6.2" height="6" fill="#ffeab3" stroke="#6a4fb5" stroke-width="0.73"/>
<path d="M17 20.4l1.4 1.4l2-2.9" stroke="#6a4fb5" stroke-width="0.73" fill="none"/>
</svg>
<div class="t b" style="left:52.2px;top:127px;font-size:11.8px;letter-spacing:0.058px;line-height:14px;color:#111;">Акт №5 от 07.03.2025 с 1 по 31 мая 2025 г.</div>
<div class="t " style="left:52.2px;top:140.5px;font-size:10.7px;letter-spacing:0.087px;line-height:13px;color:#222;">Акт по смете "ТСН"</div>
<svg style="left:12.3px;top:127.2px" width="29.52" height="34.44" viewBox="0 0 24 28">
<rect x="0.7" y="0.6" width="19.4" height="25.2" rx="1.8" fill="none" stroke="#6b6b80" stroke-width="0.73"/>
<path d="M3.2 3.6h14.4" stroke="#6b6b80" stroke-width="0.58" opacity="0.7"/>
<rect x="2.8" y="5.8" width="14.8" height="9" rx="1.7" fill="none" stroke="#6a4fb5" stroke-width="0.77"/>
<path d="M2.8 8.8h14.8M2.8 11.7h14.8M13 5.8v9" stroke="#6a4fb5" stroke-width="0.69"/>
<path d="M3.2 17.8h9.8M3.2 20.7h9.8" stroke="#6b6b80" stroke-width="0.66" opacity="0.7"/>
<rect x="15.5" y="17.4" width="6.2" height="6" fill="#fff" stroke="#6a4fb5" stroke-width="0.73"/>
<path d="M17 20.4l1.4 1.4l2-2.9" stroke="#6a4fb5" stroke-width="0.73" fill="none"/>
</svg>
<div class="t b" style="left:52.2px;top:182px;font-size:11.8px;letter-spacing:0.001px;line-height:14px;color:#111;">Акт №4 от 07.03.2025 с 1 по 30 апреля 2025 г.</div>
<div class="t " style="left:52.2px;top:195.5px;font-size:10.7px;letter-spacing:0.087px;line-height:13px;color:#222;">Акт по смете "ТСН"</div>
<svg style="left:12.3px;top:182.2px" width="29.52" height="34.44" viewBox="0 0 24 28">
<rect x="0.7" y="0.6" width="19.4" height="25.2" rx="1.8" fill="none" stroke="#6b6b80" stroke-width="0.73"/>
<path d="M3.2 3.6h14.4" stroke="#6b6b80" stroke-width="0.58" opacity="0.7"/>
<rect x="2.8" y="5.8" width="14.8" height="9" rx="1.7" fill="none" stroke="#6a4fb5" stroke-width="0.77"/>
<path d="M2.8 8.8h14.8M2.8 11.7h14.8M13 5.8v9" stroke="#6a4fb5" stroke-width="0.69"/>
<path d="M3.2 17.8h9.8M3.2 20.7h9.8" stroke="#6b6b80" stroke-width="0.66" opacity="0.7"/>
<rect x="15.5" y="17.4" width="6.2" height="6" fill="#fff" stroke="#6a4fb5" stroke-width="0.73"/>
<path d="M17 20.4l1.4 1.4l2-2.9" stroke="#6a4fb5" stroke-width="0.73" fill="none"/>
</svg>
<div class="t b" style="left:52.2px;top:268px;font-size:11.8px;letter-spacing:0.048px;line-height:14px;color:#111;">Акт №3 от 09.03.2025 с 1 по 31 марта 2025 г.</div>
<div class="t " style="left:52.2px;top:281.5px;font-size:10.7px;letter-spacing:0.087px;line-height:13px;color:#222;">Акт по смете "ТСН"</div>
<svg style="left:12.3px;top:268.2px" width="29.52" height="34.44" viewBox="0 0 24 28">
<rect x="0.7" y="0.6" width="19.4" height="25.2" rx="1.8" fill="none" stroke="#6b6b80" stroke-width="0.73"/>
<path d="M3.2 3.6h14.4" stroke="#6b6b80" stroke-width="0.58" opacity="0.7"/>
<rect x="2.8" y="5.8" width="14.8" height="9" rx="1.7" fill="none" stroke="#6a4fb5" stroke-width="0.77"/>
<path d="M2.8 8.8h14.8M2.8 11.7h14.8M13 5.8v9" stroke="#6a4fb5" stroke-width="0.69"/>
<path d="M3.2 17.8h9.8M3.2 20.7h9.8" stroke="#6b6b80" stroke-width="0.66" opacity="0.7"/>
<rect x="15.5" y="17.4" width="6.2" height="6" fill="#fff" stroke="#6a4fb5" stroke-width="0.73"/>
<path d="M17 20.4l1.4 1.4l2-2.9" stroke="#6a4fb5" stroke-width="0.73" fill="none"/>
</svg>
<div class="t b" style="left:52.2px;top:323px;font-size:11.8px;letter-spacing:0.048px;line-height:14px;color:#111;">Акт №2 от 08.03.2025 с 1 по 31 марта 2025 г.</div>
<div class="t " style="left:52.2px;top:336.5px;font-size:10.7px;letter-spacing:0.087px;line-height:13px;color:#222;">Акт по смете "ТСН"</div>
<svg style="left:12.3px;top:323.2px" width="29.52" height="34.44" viewBox="0 0 24 28">
<rect x="0.7" y="0.6" width="19.4" height="25.2" rx="1.8" fill="none" stroke="#6b6b80" stroke-width="0.73"/>
<path d="M3.2 3.6h14.4" stroke="#6b6b80" stroke-width="0.58" opacity="0.7"/>
<rect x="2.8" y="5.8" width="14.8" height="9" rx="1.7" fill="none" stroke="#6a4fb5" stroke-width="0.77"/>
<path d="M2.8 8.8h14.8M2.8 11.7h14.8M13 5.8v9" stroke="#6a4fb5" stroke-width="0.69"/>
<path d="M3.2 17.8h9.8M3.2 20.7h9.8" stroke="#6b6b80" stroke-width="0.66" opacity="0.7"/>
<rect x="15.5" y="17.4" width="6.2" height="6" fill="#fff" stroke="#6a4fb5" stroke-width="0.73"/>
<path d="M17 20.4l1.4 1.4l2-2.9" stroke="#6a4fb5" stroke-width="0.73" fill="none"/>
</svg>
<div class="t b" style="left:52.2px;top:378px;font-size:11.8px;letter-spacing:0.048px;line-height:14px;color:#111;">Акт №1 от 07.03.2025 с 1 по 31 марта 2025 г.</div>
<div class="t " style="left:52.2px;top:391.5px;font-size:10.7px;letter-spacing:0.087px;line-height:13px;color:#222;">Акт по смете "ТСН"</div>
<svg style="left:12.3px;top:378.2px" width="29.52" height="34.44" viewBox="0 0 24 28">
<rect x="0.7" y="0.6" width="19.4" height="25.2" rx="1.8" fill="none" stroke="#6b6b80" stroke-width="0.73"/>
<path d="M3.2 3.6h14.4" stroke="#6b6b80" stroke-width="0.58" opacity="0.7"/>
<rect x="2.8" y="5.8" width="14.8" height="9" rx="1.7" fill="none" stroke="#6a4fb5" stroke-width="0.77"/>
<path d="M2.8 8.8h14.8M2.8 11.7h14.8M13 5.8v9" stroke="#6a4fb5" stroke-width="0.69"/>
<path d="M3.2 17.8h9.8M3.2 20.7h9.8" stroke="#6b6b80" stroke-width="0.66" opacity="0.7"/>
<rect x="15.5" y="17.4" width="6.2" height="6" fill="#fff" stroke="#6a4fb5" stroke-width="0.73"/>
<path d="M17 20.4l1.4 1.4l2-2.9" stroke="#6a4fb5" stroke-width="0.73" fill="none"/>
</svg>
<svg style="left:305px;top:403px" width="14" height="14"><g fill="#c4c4c4"><circle cx="12" cy="2" r="1.1"/><circle cx="8" cy="6" r="1.1"/><circle cx="12" cy="6" r="1.1"/><circle cx="4" cy="10" r="1.1"/><circle cx="8" cy="10" r="1.1"/><circle cx="12" cy="10" r="1.1"/></g></svg>
</div>
<svg style="left:0;top:0" width="1762" height="1017">
<rect x="90.9" y="69.1" width="68.95" height="65.4" fill="none" stroke="#ff0000" stroke-width="3.4"/>
<rect x="91.9" y="411" width="319.3" height="162.2" fill="none" stroke="#ff0000" stroke-width="3.7"/>
<line x1="122.2" y1="136.3" x2="233.4" y2="397.5" stroke="#ff0000" stroke-width="2.8"/>
<path d="M239.4 413.4L224 396.4L238 388.8z" fill="#ff0000"/>
</svg>
<div style="left:0px;top:0px;width:1762px;height:1017px;border:1px solid #767676;border-right:2px solid #8a8a8a;pointer-events:none;"></div>
</body></html>
